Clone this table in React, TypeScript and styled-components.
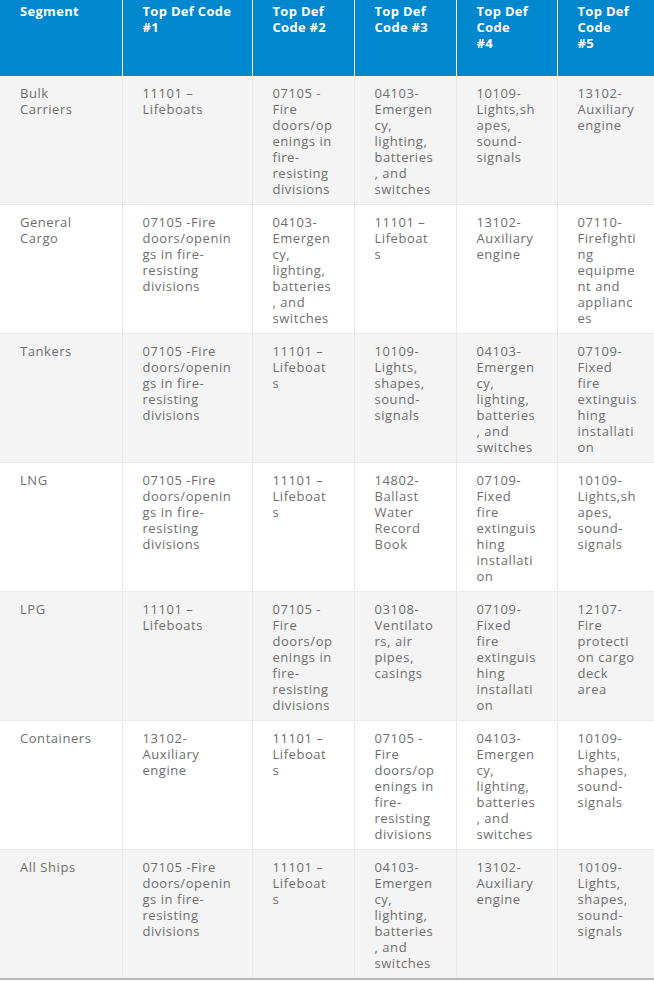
import React from "react";
import styled, { createGlobalStyle } from "styled-components";

const GlobalStyle = createGlobalStyle`
  html, body {
    margin: 0;
    padding: 0;
    background: #ffffff;
  }
  body {
    font-family: "Open Sans", "Liberation Sans", sans-serif;
  }
`;

const Table = styled.table`
  width: 654px;
  table-layout: fixed;
  border-collapse: collapse;
  font-size: 13px;
  line-height: 16px;
`;

const HeadCell = styled.th`
  height: 76px;
  box-sizing: border-box;
  padding: 3px 4px 0 20px;
  background: #0087cd;
  color: #ffffff;
  font-weight: 700;
  letter-spacing: 0.3px;
  text-align: left;
  vertical-align: top;
  white-space: nowrap;
  overflow: hidden;
  border-right: 1px solid #ffffff;
  &:last-child {
    border-right: none;
  }
`;

const Row = styled.tr<{ $shade: boolean }>`
  background: ${(p) => (p.$shade ? "#f4f4f4" : "#ffffff")};
  border-bottom: 1px solid #e9e9e9;
  &:last-child {
    border-bottom: 2px solid #b9b9b9;
  }
`;

const Cell = styled.td`
  height: 128px;
  box-sizing: border-box;
  padding: 9px 2px 7px 20px;
  color: #6e6e6e;
  letter-spacing: 0.55px;
  vertical-align: top;
  white-space: nowrap;
  overflow: hidden;
  border-right: 1px solid #e9e9e9;
  &:last-child {
    border-right: none;
  }
`;

const widths = [122, 130, 102, 102, 101, 97];

const headers = [
  ["Segment"],
  ["Top Def Code", "#1"],
  ["Top Def", "Code #2"],
  ["Top Def", "Code #3"],
  ["Top Def", "Code", "#4"],
  ["Top Def", "Code", "#5"],
];

const fireDoorsShort = ["07105 -", "Fire", "doors/op", "enings in", "fire-", "resisting", "divisions"];
const fireDoorsWide = ["07105 -Fire", "doors/openin", "gs in fire-", "resisting", "divisions"];
const emergency = ["04103-", "Emergen", "cy,", "lighting,", "batteries", ", and", "switches"];
const lifeboatSplit = ["11101 –", "Lifeboat", "s"];
const lifeboats = ["11101 –", "Lifeboats"];
const auxiliary = ["13102-", "Auxiliary", "engine"];
const lightsSh = ["10109-", "Lights,sh", "apes,", "sound-", "signals"];
const lights = ["10109-", "Lights,", "shapes,", "sound-", "signals"];
const fixedFire = ["07109-", "Fixed", "fire", "extinguis", "hing", "installati", "on"];

const rows: string[][][] = [
  [["Bulk", "Carriers"], lifeboats, fireDoorsShort, emergency, lightsSh, auxiliary],
  [
    ["General", "Cargo"],
    fireDoorsWide,
    emergency,
    lifeboatSplit,
    auxiliary,
    ["07110-", "Firefighti", "ng", "equipme", "nt and", "applianc", "es"],
  ],
  [["Tankers"], fireDoorsWide, lifeboatSplit, lights, emergency, fixedFire],
  [["LNG"], fireDoorsWide, lifeboatSplit, ["14802-", "Ballast", "Water", "Record", "Book"], fixedFire, lightsSh],
  [
    ["LPG"],
    lifeboats,
    fireDoorsShort,
    ["03108-", "Ventilato", "rs, air", "pipes,", "casings"],
    fixedFire,
    ["12107-", "Fire", "protecti", "on cargo", "deck", "area"],
  ],
  [["Containers"], auxiliary, lifeboatSplit, fireDoorsShort, emergency, lights],
  [["All Ships"], fireDoorsWide, lifeboatSplit, emergency, auxiliary, lights],
];

const Lines: React.FC<{ lines: string[] }> = ({ lines }) => (
  <>
    {lines.map((l, i) => (
      <React.Fragment key={i}>
        {i > 0 && <br />}
        {l}
      </React.Fragment>
    ))}
  </>
);

export default function App() {
  return (
    <>
      <GlobalStyle />
      <Table>
        <colgroup>
          {widths.map((w, i) => (
            <col key={i} style={{ width: w }} />
          ))}
        </colgroup>
        <thead>
          <tr>
            {headers.map((h, i) => (
              <HeadCell key={i}>
                <Lines lines={h} />
              </HeadCell>
            ))}
          </tr>
        </thead>
        <tbody>
          {rows.map((r, ri) => (
            <Row key={ri} $shade={ri % 2 === 0}>
              {r.map((c, ci) => (
                <Cell key={ci}>
                  <Lines lines={c} />
                </Cell>
              ))}
            </Row>
          ))}
        </tbody>
      </Table>
    </>
  );
}
